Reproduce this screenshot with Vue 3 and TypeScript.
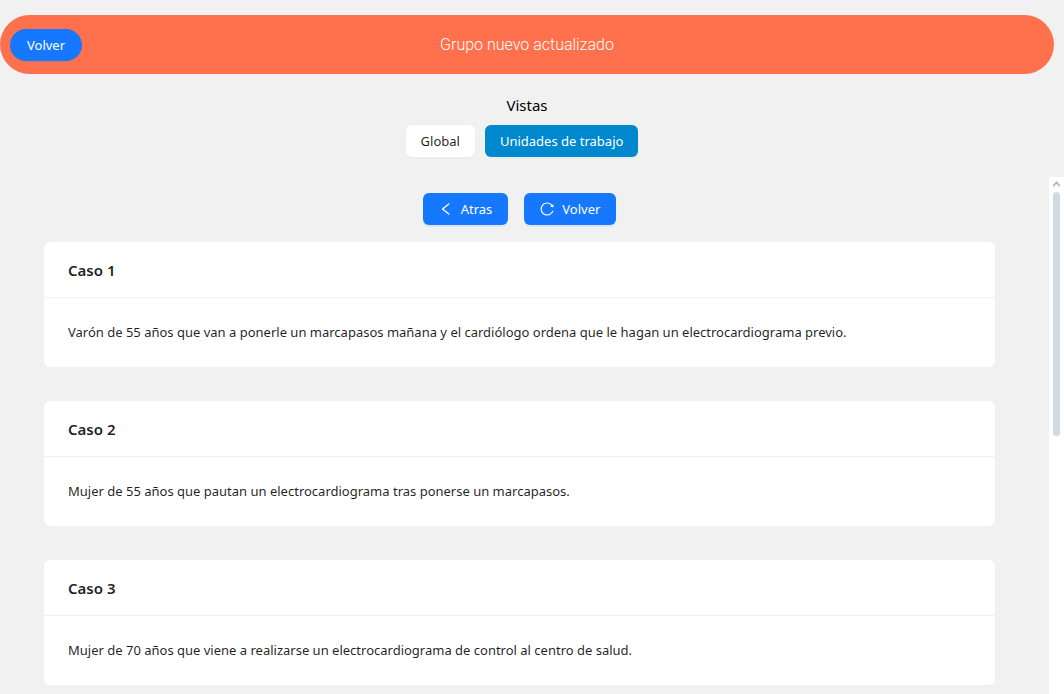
<script setup lang="ts">
import { ref } from 'vue'

interface Caso {
  id: number
  titulo: string
  texto: string
}

type Vista = 'global' | 'unidades'

const vistas: { clave: Vista; nombre: string }[] = [
  { clave: 'global', nombre: 'Global' },
  { clave: 'unidades', nombre: 'Unidades de trabajo' },
]

const vistaActiva = ref<Vista>('unidades')

const casos: Caso[] = [
  {
    id: 1,
    titulo: 'Caso 1',
    texto:
      'Varón de 55 años que van a ponerle un marcapasos mañana y el cardiólogo ordena que le hagan un electrocardiograma previo.',
  },
  {
    id: 2,
    titulo: 'Caso 2',
    texto: 'Mujer de 55 años que pautan un electrocardiograma tras ponerse un marcapasos.',
  },
  {
    id: 3,
    titulo: 'Caso 3',
    texto: 'Mujer de 70 años que viene a realizarse un electrocardiograma de control al centro de salud.',
  },
]
</script>

<template>
  <div class="page">
    <header class="banner">
      <button type="button" class="btn primary pill">Volver</button>
      <h1 class="banner-title">Grupo nuevo actualizado</h1>
    </header>

    <nav class="views">
      <h2 class="views-title">Vistas</h2>
      <div class="views-list">
        <button
          v-for="vista in vistas"
          :key="vista.clave"
          type="button"
          class="btn view"
          :class="{ active: vista.clave === vistaActiva }"
          @click="vistaActiva = vista.clave"
        >
          {{ vista.nombre }}
        </button>
      </div>
    </nav>

    <div class="panel">
      <main class="content">
        <div class="actions">
          <button type="button" class="btn primary">
            <svg class="icon" viewBox="64 64 896 896" aria-hidden="true">
              <path d="M724 218.3V141c0-6.7-7.7-10.4-12.9-6.3L260.3 486.8a31.86 31.86 0 000 50.3l450.8 352.1c5.3 4.1 12.9.4 12.9-6.3v-77.3c0-4.9-2.3-9.6-6.1-12.6l-360-281 360-281.1c3.8-3 6.1-7.7 6.1-12.6z" />
            </svg>
            Atras
          </button>
          <button type="button" class="btn primary">
            <svg class="icon" viewBox="64 64 896 896" aria-hidden="true">
              <path d="M909.1 209.3l-56.4 44.1C775.8 155.1 656.2 92 521.9 92 290 92 102.3 279.5 102 511.5 101.7 743.7 289.8 932 521.9 932c181.3 0 335.8-115 394.6-276.1 1.5-4.2-.7-8.9-4.9-10.3l-56.7-19.5a8 8 0 00-10.1 4.8c-1.8 5-3.8 10-5.9 14.9-17.3 41-42.1 77.8-73.7 109.4A344.77 344.77 0 01655.9 829c-42.3 17.9-87.4 27-133.8 27-46.5 0-91.5-9.1-133.8-27A341.5 341.5 0 01279 755.2a342.16 342.16 0 01-73.7-109.4c-17.9-42.4-27-87.4-27-133.9s9.1-91.5 27-133.9c17.3-41 42.1-77.8 73.7-109.4 31.6-31.6 68.4-56.4 109.3-73.8 42.3-17.9 87.4-27 133.8-27 46.5 0 91.5 9.1 133.8 27a341.5 341.5 0 01109.3 73.8c9.9 9.9 19.2 20.4 27.8 31.4l-60.2 47a8 8 0 003 14.1l175.6 43c5 1.2 9.9-2.6 9.9-7.7l.8-180.9c-.1-6.6-7.8-10.3-13-6.2z" />
            </svg>
            Volver
          </button>
        </div>

        <article v-for="caso in casos" :key="caso.id" class="card">
          <h3 class="card-title">{{ caso.titulo }}</h3>
          <p class="card-body">{{ caso.texto }}</p>
        </article>
      </main>

      <div class="scrollbar" aria-hidden="true">
        <svg class="scroll-arrow" viewBox="0 0 7 6">
          <path d="M0 4 3.5 0 7 4V6L3.5 3 0 6Z" />
        </svg>
        <div class="scroll-track">
          <div class="scroll-thumb"></div>
        </div>
      </div>
    </div>
  </div>
</template>

<style>
body {
  margin: 0;
  background: #f1f1f1;
}
</style>

<style scoped>
.page {
  display: flex;
  flex-direction: column;
  box-sizing: border-box;
  height: 100vh;
  padding-top: 15px;
  background: #f1f1f1;
  color: rgba(0, 0, 0, 0.88);
  font-family: 'Noto Sans', 'Open Sans', sans-serif;
  font-size: 13px;
  line-height: 22px;
}

.banner {
  display: grid;
  grid-template-columns: 1fr auto 1fr;
  align-items: center;
  flex: none;
  margin-right: 10px;
  padding: 14px 10px 13px;
  border-radius: 30px;
  background: #ff704c;
}

.banner-title {
  margin: 0;
  color: #fff;
  font-family: Roboto, sans-serif;
  font-size: 16px;
  font-weight: 300;
  line-height: 24px;
}

.btn {
  display: inline-flex;
  align-items: center;
  justify-content: center;
  gap: 8px;
  height: 32px;
  padding: 0 16px;
  border: 0;
  border-radius: 6px;
  font: inherit;
  white-space: nowrap;
  cursor: pointer;
}

.primary {
  background: #1677ff;
  box-shadow: 0 2px 0 rgba(5, 145, 255, 0.1);
  color: #fff;
}

.pill {
  justify-self: start;
  padding: 0 17px;
  border-radius: 16px;
}

.icon {
  width: 14px;
  height: 14px;
  fill: currentColor;
}

.views {
  flex: none;
  margin-right: 10px;
  padding: 19px 0 20px;
  text-align: center;
}

.views-title {
  margin: 0 0 8px;
  color: #000;
  font-size: 15px;
  font-weight: 400;
  line-height: 24px;
}

.views-list {
  display: flex;
  justify-content: center;
}

.view {
  margin-right: 10px;
  padding: 0 15px;
  background: #fff;
  box-shadow: 0 2px 0 rgba(0, 0, 0, 0.02);
  color: rgba(0, 0, 0, 0.88);
}

.view.active {
  background: #0088ce;
  color: #fff;
}

.panel {
  display: flex;
  flex: 1;
  min-height: 0;
}

.content {
  flex: 1;
  min-width: 0;
  padding: 16px 54px 0 44px;
  overflow-y: auto;
}

.actions {
  display: flex;
  justify-content: center;
  gap: 16px;
  margin-bottom: 17px;
}

.card {
  margin-bottom: 34px;
  border-radius: 6px;
  background: #fff;
}

.card:last-child {
  margin-bottom: 8px;
}

.card-title {
  margin: 0;
  padding: 16px 24px 15px;
  border-bottom: 1px solid #f0f0f0;
  font-size: 15px;
  font-weight: 600;
  line-height: 24px;
}

.card-body {
  margin: 0;
  padding: 23px 24px 24px;
}

.scrollbar {
  display: flex;
  flex-direction: column;
  align-items: center;
  flex: none;
  width: 15px;
  padding: 4px 0 15px;
  box-sizing: border-box;
  background: #fff;
}

.scroll-arrow {
  width: 7px;
  height: 6px;
  margin-bottom: 5px;
  fill: #b5b5b5;
}

.scroll-track {
  flex: 1;
  width: 7px;
}

.scroll-thumb {
  height: 50%;
  border-radius: 4px;
  background: #d0dae2;
}
</style>
